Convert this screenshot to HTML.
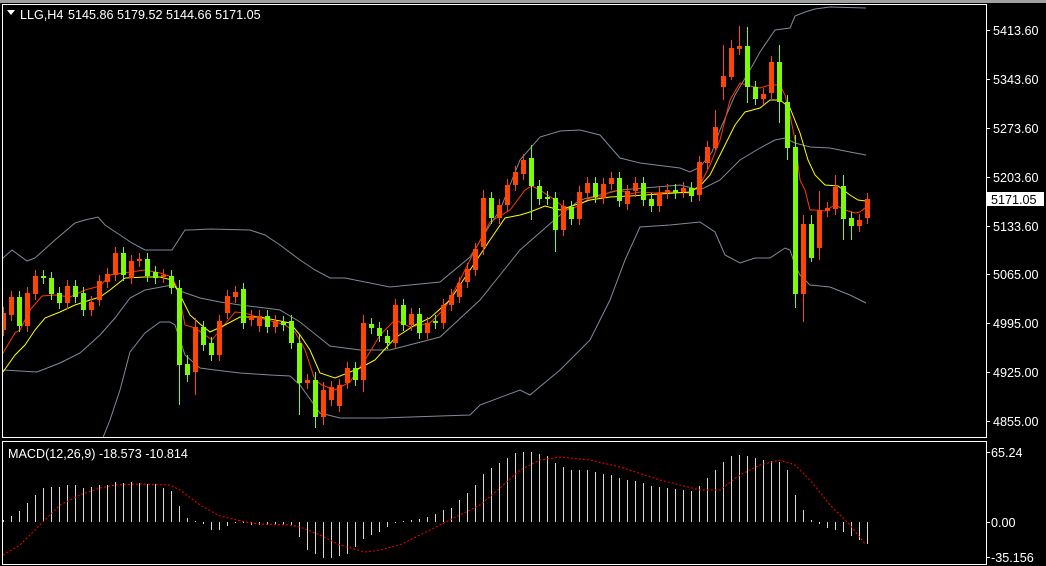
<!DOCTYPE html>
<html><head><meta charset="utf-8"><style>
html,body{margin:0;padding:0;background:#000;width:1046px;height:566px;overflow:hidden}
svg{display:block}
text{font-family:"Liberation Sans",sans-serif;font-size:12.6px;fill:#fff}
</style></head><body>
<svg id="s" width="1046" height="566" xmlns="http://www.w3.org/2000/svg">
<rect x="0" y="0" width="1046" height="566" fill="#000"/>
<rect x="0" y="0" width="1046" height="3" fill="#a0a0a0"/>
<defs>
<clipPath id="cm"><rect x="3" y="5" width="983" height="432"/></clipPath>
<clipPath id="cd"><rect x="3" y="442" width="983" height="122"/></clipPath>
</defs>
<g id="main" clip-path="url(#cm)"></g>
<g id="macd" clip-path="url(#cd)"></g>
<rect x="2.5" y="4.5" width="984" height="433" fill="none" stroke="#fff" stroke-width="1"/>
<rect x="2.5" y="441.5" width="984" height="123" fill="none" stroke="#fff" stroke-width="1"/>
<g id="ticks" stroke="#fff"></g>
<polygon points="7,10 15,10 11,15" fill="#fff"/>
<text x="20" y="19">LLG,H4</text>
<text x="68" y="19">5145.86 5179.52 5144.66 5171.05</text>
<text x="8" y="458">MACD(12,26,9) -18.573 -10.814</text>
<g id="lbl"></g>
<rect x="987" y="192" width="57" height="14" fill="#fff"/>
<text x="991" y="204" style="fill:#000">5171.05</text>
</svg>
<script>
var NS="http://www.w3.org/2000/svg";
function el(p,t,a){var e=document.createElementNS(NS,t);for(var k in a)e.setAttribute(k,a[k]);p.appendChild(e);return e;}
var M=document.getElementById('main'),D=document.getElementById('macd'),L=document.getElementById('lbl'),T=document.getElementById('ticks');
var C=[[313,330,'o'],[297,315,'o'],[297,326,'g'],[293,326,'o'],[276,294,'o'],[276,278,'g'],[278,294,'g'],[293,303,'g'],[286,303,'o'],[286,297,'g'],
[293,310,'g'],[302,310,'o'],[281,300,'o'],[274,282,'o'],[253,275,'o'],[253,275,'g'],[261,278,'o'],[259,261,'o'],[259,276,'g'],[272,278,'g'],
[275,277,'o'],[276,288,'g'],[288,365,'g'],[364,375,'g'],[327,372,'o'],[327,345,'g'],[343,355,'g'],[321,355,'o'],[296,313,'o'],[292,297,'o'],
[289,323,'g'],[316,320,'o'],[316,326,'o'],[316,327,'g'],[321,327,'o'],[322,325,'g'],[321,343,'g'],[343,383,'g'],[380,383,'o'],[380,417,'g'],
[390,417,'o'],[387,400,'o'],[385,406,'o'],[368,383,'o'],[368,380,'g'],[323,380,'o'],[324,328,'g'],[328,336,'g'],[336,343,'g'],[305,343,'o'],
[305,325,'g'],[314,325,'o'],[314,333,'g'],[323,333,'o'],[321,323,'g'],[305,323,'o'],[295,305,'o'],[283,297,'o'],[269,282,'o'],[249,270,'o'],
[198,247,'o'],[198,218,'g'],[205,218,'o'],[185,205,'o'],[172,185,'o'],[160,174,'o'],[158,186,'g'],[186,199,'g'],[197,199,'g'],[198,230,'g'],
[206,230,'o'],[207,219,'g'],[192,219,'o'],[183,193,'o'],[183,197,'g'],[184,198,'o'],[178,184,'o'],[178,201,'g'],[191,204,'o'],[183,191,'o'],
[183,200,'g'],[199,206,'g'],[193,206,'o'],[190,193,'o'],[190,193,'g'],[188,192,'o'],[188,196,'g'],[162,195,'o'],[147,163,'o'],[127,148,'o'],
[76,87,'o'],[48,77,'o'],[46,49,'o'],[46,87,'g'],[87,99,'g'],[94,99,'o'],[62,93,'o'],[62,102,'g'],[102,148,'g'],[147,294,'g'],
[224,294,'o'],[224,258,'g'],[210,248,'o'],[208,211,'o'],[187,209,'o'],[186,219,'g'],[218,226,'g'],[220,226,'o'],[199,218,'o']];
var W={22:[280,405],23:[355,382],24:[318,395],37:[335,415],39:[372,428],40:[382,425],45:[315,392],66:[145,220],69:[192,252],60:[190,255],
90:[45,100],91:[40,80],92:[26,55],93:[27,103],97:[45,123],98:[95,160],99:[135,308],100:[215,322],101:[215,262],102:[191,260],104:[175,215],105:[175,240],106:[212,240],89:[110,150]};
function pl(p,pts,col,w,dash){el(p,'polyline',{points:pts,fill:'none',stroke:col,'stroke-width':w||1,'stroke-dasharray':dash||'none'});}
var bandCol='#7f8a99';
pl(M,"3,258 12,250 27,261 35,258 55,240 75,223 85,220 98,217 105,225 120,235 132,243 145,250 172,250 185,230 190,230 210,229 250,230 265,235 280,245 300,260 315,270 330,278 345,278 390,287 440,282 470,257 490,225 500,210 520,160 540,137 560,131 580,130 600,135 620,158 640,163 680,168 690,172 700,167 712,152 720,130 735,95 750,70 760,52 775,30 790,28 795,16 805,12 815,9 830,7 866,8",bandCol);
pl(M,"3,370 37,372 60,363 80,353 100,335 115,318 130,298 145,290 172,285 180,291 200,298 220,302 240,305 265,308 280,310 300,322 320,338 330,346 360,350 390,350 440,337 480,300 520,250 560,215 580,200 620,190 680,185 700,190 720,180 740,160 760,148 775,140 785,138 795,143 810,147 830,148 850,152 866,155",bandCol);
pl(M,"95,460 102,440 110,420 120,390 130,352 145,333 160,322 170,322 175,325 185,355 200,368 215,370 240,373 270,375 290,376 300,385 320,413 340,418 380,418 470,415 480,405 520,390 530,395 560,370 590,340 610,300 625,260 640,227 670,225 700,222 715,232 725,255 740,263 755,258 770,258 785,248 790,250 795,265 800,275 810,285 830,287 850,295 866,303",bandCol);
pl(M,"3,353 15,333 20,330 30,310 42,296 55,295 70,297 85,290 100,286 110,275 130,272 145,270 160,273 172,277 178,290 185,325 195,328 205,335 212,340 220,330 235,312 245,313 260,318 275,322 285,325 295,332 305,350 315,380 322,385 335,390 350,382 370,352 380,335 395,320 410,327 430,323 445,308 460,280 475,250 490,222 510,210 525,190 532,186 540,190 552,198 565,208 570,210 580,205 590,198 600,197 610,192 620,190 630,194 640,192 655,193 670,192 690,193 700,185 710,165 720,140 730,100 740,83 750,86 760,88 770,85 780,85 785,95 790,115 795,140 800,180 805,190 810,210 815,210 825,211 835,205 845,210 855,213 860,212 866,207","#ff3a00");
pl(M,"3,372 15,355 25,345 35,330 45,318 60,312 75,305 90,300 100,297 110,290 125,278 145,277 160,277 172,280 180,295 190,315 200,324 210,332 225,325 240,317 260,317 275,320 290,323 300,335 310,350 320,373 335,378 350,372 360,368 375,360 395,338 415,325 430,318 450,300 470,270 490,240 505,218 520,215 530,212 545,206 560,210 575,205 590,200 610,197 630,196 660,194 690,192 700,186 710,175 720,155 735,125 745,112 760,108 770,100 780,100 790,108 800,133 808,160 815,175 825,185 838,186 850,195 858,200 866,201","#ffff00");
for(var i=0;i<C.length;i++){var c=C[i],x=3.5+8*i,col=c[2]=='o'?'#ff4500':'#7cfc00';
 var hl=W[i]||[c[0]-6,c[1]+6];
 el(M,'line',{x1:x,x2:x,y1:hl[0],y2:hl[1],stroke:col,'stroke-width':1});
 var h=Math.max(c[1]-c[0],1);
 el(M,'rect',{x:x-2.5,y:c[0],width:5,height:h,fill:col});
}
var H=[520,516,511,503,495,488,487,487,485,485,488,487,485,485,482,483,482,483,484,484,488,491,506,518,521,524,530,530,526,523,523,525,525,525,525,525,525,537,550,554,558,558,556,554,547,539,535,532,527,523,521,520,519,517,514,510,508,500,493,485,474,468,463,458,453,452,452,454,456,463,467,470,470,470,472,474,475,478,480,481,483,486,487,488,489,490,491,486,478,470,462,456,455,456,458,460,461,462,470,495,510,520,524,528,530,532,536,540,544];
for(var i=0;i<H.length;i++){var x=3.5+8*i;el(D,'line',{x1:x,x2:x,y1:522,y2:H[i],stroke:'#d8d8d8','stroke-width':1});}
pl(D,"3,555 20,545 40,525 60,505 80,495 100,488 115,485 140,484 170,485 180,490 200,505 220,516 245,522 260,524 290,525 300,527 320,535 340,545 365,552 380,550 400,545 420,535 440,525 460,515 480,505 500,488 520,470 540,460 560,457 590,460 620,467 660,480 700,490 720,490 740,475 760,465 780,460 795,465 810,480 830,505 850,525 866,545","#ff0000",1,"2,2");
var P=[["5413.60",30],["5343.60",79],["5273.60",128],["5203.60",177],["5133.60",226],["5065.00",274],["4995.00",323],["4925.00",372],["4855.00",421]];
P.forEach(function(p){el(L,'text',{x:993,y:p[1]+5}).textContent=p[0];el(T,'line',{x1:987,x2:990,y1:p[1]+.5,y2:p[1]+.5});});
[["65.24",452],["0.00",522],["-35.156",557]].forEach(function(p){el(L,'text',{x:991,y:p[1]+5}).textContent=p[0];el(T,'line',{x1:987,x2:990,y1:p[1]+.5,y2:p[1]+.5});});
</script>
</body></html>
